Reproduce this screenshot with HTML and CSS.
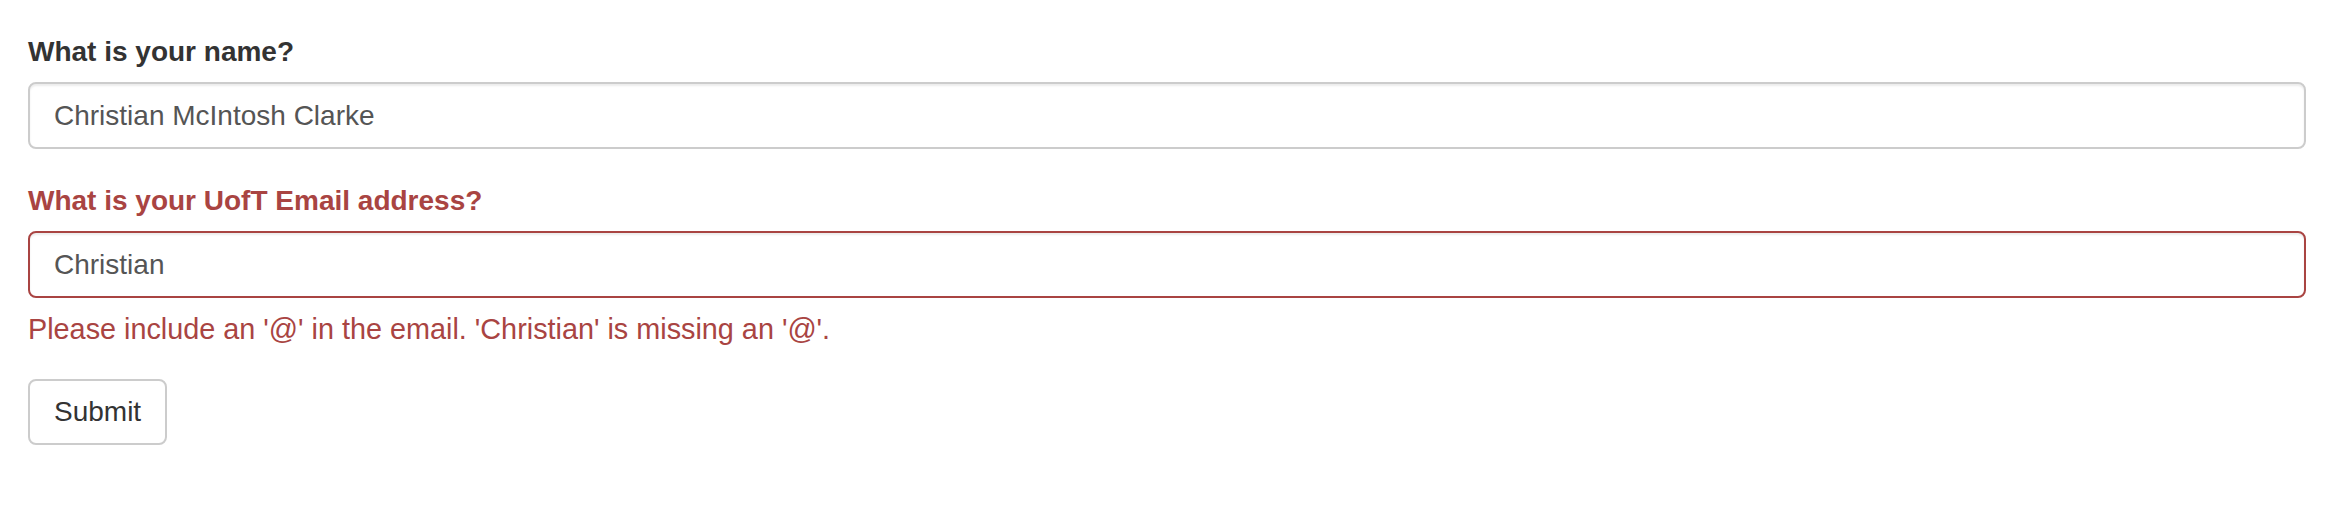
FILE: index.html
```html
<!DOCTYPE html>
<html lang="en">
<head>
<meta charset="utf-8">
<title>Form</title>
<link rel="stylesheet" href="styles.css">
</head>
<body>
<form class="form" novalidate>
  <div class="form-group">
    <label class="control-label" for="name">What is your name?</label>
    <input class="form-control" id="name" type="text" value="Christian McIntosh Clarke">
  </div>
  <div class="form-group has-error">
    <label class="control-label" for="email">What is your UofT Email address?</label>
    <input class="form-control" id="email" type="email" value="Christian">
    <span class="help-block">Please include an '@' in the email. 'Christian' is missing an '@'.</span>
  </div>
  <button class="btn" type="button">Submit</button>
</form>
</body>
</html>
```
FILE: styles.css
```css
html, body {
  margin: 0;
  padding: 0;
  background: #fff;
}
body {
  font-family: "Liberation Sans", Arial, Helvetica, sans-serif;
  font-size: 28px;
  line-height: 40px;
  color: #333;
}
.form {
  padding: 32px 44px 0 28px;
}
.form-group {
  margin-bottom: 32px;
}
.form-group.has-error {
  margin-bottom: 30px;
}
.control-label {
  display: block;
  font-weight: bold;
  line-height: 40px;
  margin-bottom: 10px;
  color: #333;
}
.form-control {
  display: block;
  box-sizing: border-box;
  width: 100%;
  height: 67px;
  margin: 0;
  padding: 0 24px;
  font-family: inherit;
  font-size: 28px;
  color: #555;
  background: #fff;
  border: 2px solid #ccc;
  border-radius: 8px;
  box-shadow: inset 0 2px 2px rgba(0, 0, 0, 0.075);
  outline: none;
}
.has-error .control-label,
.has-error .help-block {
  color: #a94442;
}
.has-error .form-control {
  border-color: #a94442;
}
.help-block {
  display: block;
  margin-top: 11px;
  font-size: 28.8px;
  line-height: 40px;
}
.btn {
  display: block;
  box-sizing: border-box;
  height: 66px;
  padding: 0 24px;
  font-family: inherit;
  font-size: 28px;
  color: #333;
  background: #fff;
  border: 2px solid #ccc;
  border-radius: 8px;
  cursor: pointer;
}
```
